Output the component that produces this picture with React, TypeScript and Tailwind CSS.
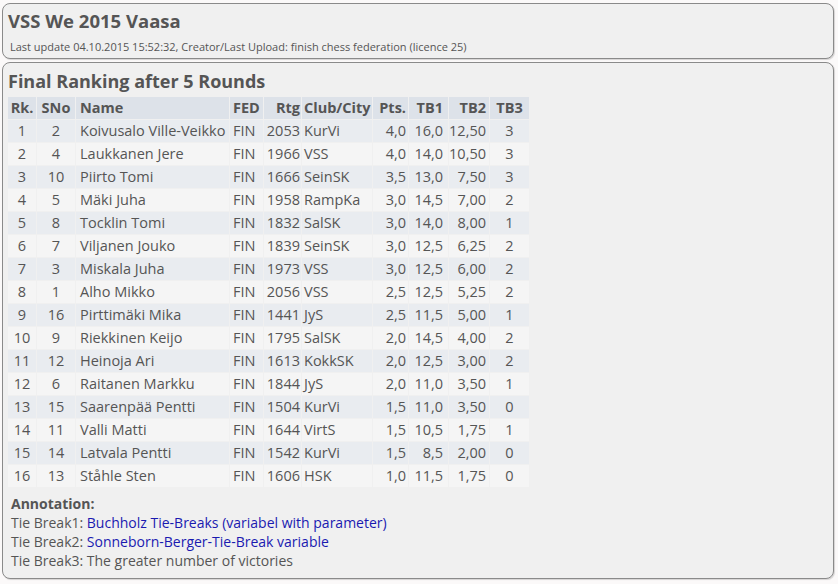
const rows: [number, number, string, string, number, string, string, string, string, number][] = [
  [1, 2, 'Koivusalo Ville-Veikko', 'FIN', 2053, 'KurVi', '4,0', '16,0', '12,50', 3],
  [2, 4, 'Laukkanen Jere', 'FIN', 1966, 'VSS', '4,0', '14,0', '10,50', 3],
  [3, 10, 'Piirto Tomi', 'FIN', 1666, 'SeinSK', '3,5', '13,0', '7,50', 3],
  [4, 5, 'Mäki Juha', 'FIN', 1958, 'RampKa', '3,0', '14,5', '7,00', 2],
  [5, 8, 'Tocklin Tomi', 'FIN', 1832, 'SalSK', '3,0', '14,0', '8,00', 1],
  [6, 7, 'Viljanen Jouko', 'FIN', 1839, 'SeinSK', '3,0', '12,5', '6,25', 2],
  [7, 3, 'Miskala Juha', 'FIN', 1973, 'VSS', '3,0', '12,5', '6,00', 2],
  [8, 1, 'Alho Mikko', 'FIN', 2056, 'VSS', '2,5', '12,5', '5,25', 2],
  [9, 16, 'Pirttimäki Mika', 'FIN', 1441, 'JyS', '2,5', '11,5', '5,00', 1],
  [10, 9, 'Riekkinen Keijo', 'FIN', 1795, 'SalSK', '2,0', '14,5', '4,00', 2],
  [11, 12, 'Heinoja Ari', 'FIN', 1613, 'KokkSK', '2,0', '12,5', '3,00', 2],
  [12, 6, 'Raitanen Markku', 'FIN', 1844, 'JyS', '2,0', '11,0', '3,50', 1],
  [13, 15, 'Saarenpää Pentti', 'FIN', 1504, 'KurVi', '1,5', '11,0', '3,50', 0],
  [14, 11, 'Valli Matti', 'FIN', 1644, 'VirtS', '1,5', '10,5', '1,75', 1],
  [15, 14, 'Latvala Pentti', 'FIN', 1542, 'KurVi', '1,5', '8,5', '2,00', 0],
  [16, 13, 'Ståhle Sten', 'FIN', 1606, 'HSK', '1,0', '11,5', '1,75', 0],
];

const headers: { label: string; cls: string }[] = [
  { label: 'Rk.', cls: 'w-[28px] text-center' },
  { label: 'SNo', cls: 'w-[38px] text-center' },
  { label: 'Name', cls: 'w-[153px] text-left pl-[4px]' },
  { label: 'FED', cls: 'w-[33px] text-left pl-[3px]' },
  { label: 'Rtg', cls: 'w-[37px] text-right pr-[1px]' },
  { label: 'Club/City', cls: 'w-[70px] text-left pl-[2px]' },
  { label: 'Pts.', cls: 'w-[35px] text-right pr-[2px]' },
  { label: 'TB1', cls: 'w-[39px] text-right pr-[5px]' },
  { label: 'TB2', cls: 'w-[40px] text-right pr-[3px]' },
  { label: 'TB3', cls: 'w-[39px] text-center' },
];

export default function App() {
  return (
    <div className="min-h-[584px] w-[838px] bg-[#fbf9f9] px-[2px] pt-[3px] font-['Open_Sans',sans-serif] text-[#555555]">
      <div className="w-[832px] rounded-[8px] border border-[#8a8a8a] bg-[#f0f0f0] px-[5px] pb-[2px] pt-[4px] shadow-[1px_1px_1px_rgba(0,0,0,0.15)]">
        <h1 className="text-[18.5px] font-bold leading-[25px]">VSS We 2015 Vaasa</h1>
        <p className="mt-[5px] pl-[2px] text-[11px] leading-[18px]">
          Last update 04.10.2015 15:52:32, Creator/Last Upload: finish chess federation (licence 25)
        </p>
      </div>

      <div className="mt-[3px] h-[517px] w-[832px] rounded-[8px] border border-[#8a8a8a] bg-[#f0f0f0] px-[4px] pt-[6px] shadow-[1px_1px_1px_rgba(0,0,0,0.15)]">
        <h2 className="pl-[1px] text-[18px] font-bold leading-[25px]">Final Ranking after 5 Rounds</h2>
        <table className="mt-[2px] border-separate border-spacing-[1px] text-[14.5px]">
          <thead>
            <tr className="bg-[#dde2e9]">
              {headers.map((h) => (
                <th key={h.label} className={`${h.cls} h-[22px] p-0 font-bold leading-[22px]`}>
                  {h.label}
                </th>
              ))}
            </tr>
          </thead>
          <tbody>
            {rows.map((r, i) => (
              <tr key={r[0]} className={i % 2 === 0 ? 'bg-[#e9ecf0]' : 'bg-[#f5f5f5]'}>
                <td className="h-[22px] p-0 text-center leading-[22px]">{r[0]}</td>
                <td className="p-0 text-center">{r[1]}</td>
                <td className="whitespace-nowrap p-0 pl-[4px]">{r[2]}</td>
                <td className="p-0 pl-[3px]">{r[3]}</td>
                <td className="p-0 pr-[1px] text-right">{r[4]}</td>
                <td className="p-0 pl-[2px]">{r[5]}</td>
                <td className="p-0 pr-[2px] text-right">{r[6]}</td>
                <td className="p-0 pr-[5px] text-right">{r[7]}</td>
                <td className="p-0 pr-[3px] text-right">{r[8]}</td>
                <td className="p-0 text-center">{r[9]}</td>
              </tr>
            ))}
          </tbody>
        </table>

        <div className="mt-[6px] pl-[4px] text-[14px] leading-[19px]">
          <div className="font-bold">Annotation:</div>
          <div>
            Tie Break1: <span className="text-[#1a1ab0]">Buchholz Tie-Breaks (variabel with parameter)</span>
          </div>
          <div>
            Tie Break2: <span className="text-[#1a1ab0]">Sonneborn-Berger-Tie-Break variable</span>
          </div>
          <div>Tie Break3: The greater number of victories</div>
        </div>
      </div>
    </div>
  );
}
